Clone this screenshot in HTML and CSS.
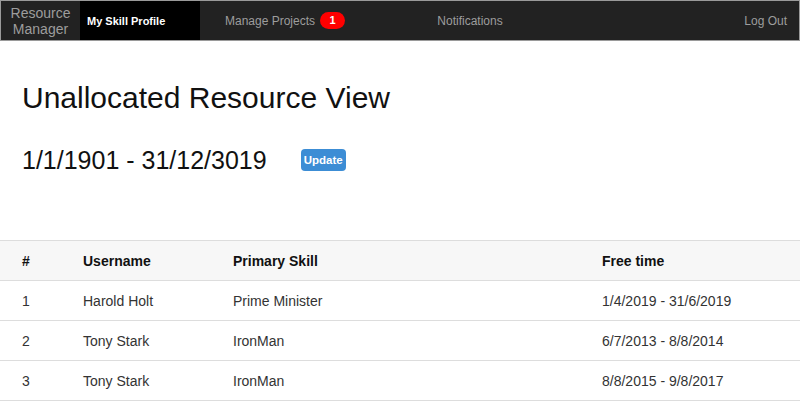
FILE: index.html
```html
<!DOCTYPE html>
<html>
<head>
<meta charset="utf-8">
<link rel="stylesheet" href="styles.css">
</head>
<body>
<nav class="navbar">
  <a class="brand">Resource<br>Manager</a>
  <a class="nav-item active">My Skill Profile</a>
  <a class="nav-item projects">Manage Projects <span class="badge">1</span></a>
  <a class="nav-item notifications">Notifications</a>
  <a class="nav-item logout">Log Out</a>
</nav>
<main class="content">
  <h1 class="title">Unallocated Resource View</h1>
  <div class="range-row">
    <h2 class="range">1/1/1901 - 31/12/3019</h2>
    <button class="btn-update">Update</button>
  </div>
</main>
<table class="table">
  <thead>
    <tr><th class="c1">#</th><th class="c2">Username</th><th class="c3">Primary Skill</th><th class="c4">Free time</th></tr>
  </thead>
  <tbody>
    <tr><td>1</td><td>Harold Holt</td><td>Prime Minister</td><td>1/4/2019 - 31/6/2019</td></tr>
    <tr><td>2</td><td>Tony Stark</td><td>IronMan</td><td>6/7/2013 - 8/8/2014</td></tr>
    <tr><td>3</td><td>Tony Stark</td><td>IronMan</td><td>8/8/2015 - 9/8/2017</td></tr>
  </tbody>
</table>
</body>
</html>
```
FILE: styles.css
```css
html, body {
  margin: 0;
  padding: 0;
  background: #fff;
  font-family: "Liberation Sans", Arial, sans-serif;
  color: #222;
}
.navbar {
  width: 800px;
  height: 41px;
  box-sizing: border-box;
  background: #222;
  border: 1px solid #9a9a9a;
  display: flex;
  align-items: stretch;
}
.navbar a {
  text-decoration: none;
  cursor: pointer;
}
.brand {
  width: 79px;
  color: #9d9d9d;
  font-size: 14px;
  line-height: 16px;
  text-align: center;
  display: flex;
  align-items: center;
  justify-content: center;
}
.nav-item {
  color: #9d9d9d;
  font-size: 12px;
  display: flex;
  align-items: center;
}
.nav-item.active {
  background: #000;
  color: #fff;
  font-weight: bold;
  font-size: 11px;
  width: 120px;
  padding-left: 7px;
  box-sizing: border-box;
}
.nav-item.projects {
  width: 170px;
  justify-content: center;
}
.nav-item.notifications {
  width: 200px;
  justify-content: center;
}
.nav-item.logout {
  margin-left: auto;
  padding-right: 12px;
}
.badge {
  display: inline-block;
  background: #f00;
  color: #fff;
  font-weight: bold;
  font-size: 11px;
  line-height: 17px;
  width: 25px;
  text-align: center;
  border-radius: 9px;
  margin-left: 5px;
}
.content {
  padding: 0 22px;
}
.title {
  font-weight: normal;
  font-size: 30px;
  margin: 40px 0 0 0;
  line-height: 34px;
  color: #111;
}
.range-row {
  display: flex;
  align-items: center;
  margin-top: 30px;
  height: 30px;
}
.range {
  font-weight: normal;
  font-size: 25px;
  line-height: 30px;
  margin: 0;
  color: #111;
}
.btn-update {
  margin-left: 34px;
  background: #3c8dd5;
  color: #fff;
  border: none;
  border-radius: 4px;
  font-family: "Liberation Sans", Arial, sans-serif;
  font-weight: bold;
  font-size: 11.5px;
  height: 22px;
  width: 45px;
  padding: 0;
}
.table {
  margin-top: 65px;
  width: 800px;
  border-collapse: collapse;
  font-size: 14px;
}
.table th, .table td {
  text-align: left;
  height: 39px;
  padding: 0 0 0 22px;
  border-top: 1px solid #ddd;
  border-bottom: 1px solid #ddd;
}
.table thead tr {
  background: #f7f7f7;
}
.table th {
  color: #111;
}
.table td {
  color: #333;
}
.c1 { width: 39px; }
.c2 { width: 128px; }
.c3 { width: 347px; }
```
